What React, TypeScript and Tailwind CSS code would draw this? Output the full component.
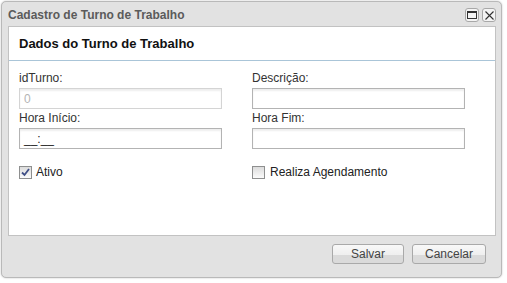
import React from "react";

const font = { fontFamily: '"Liberation Sans", Arial, sans-serif' };

function Checkbox({ checked }: { checked?: boolean }) {
  return (
    <span className="w-[13px] h-[13px] border border-[#8e8f8f] bg-gradient-to-b from-[#dcdcdc] to-[#fbfbfb] flex items-center justify-center shrink-0">
      {checked && (
        <svg width="9" height="9" viewBox="0 0 9 9">
          <path d="M1 4.5 L3.5 7 L8 1" fill="none" stroke="#3f4f86" strokeWidth="1.8" />
        </svg>
      )}
    </span>
  );
}

function Field({ label, value, disabled, w }: { label: string; value?: string; disabled?: boolean; w: string }) {
  return (
    <div className="flex flex-col">
      <div className="h-[16px] leading-[16px] text-[12px] text-[#333]">{label}</div>
      <div
        className={`mt-[2px] h-[21px] ${w} border ${disabled ? "border-[#d4d4d4] text-[#b4b4b4]" : "border-[#b3b3b3] text-[#222]"} bg-white shadow-[inset_0_2px_2px_rgba(0,0,0,0.07)] px-[4px] flex items-center text-[12px]`}
      >
        {value}
      </div>
    </div>
  );
}

export default function App() {
  return (
    <div className="w-[507px] h-[283px] bg-white" style={font}>
      <div className="relative left-[1px] top-[1px] w-[501px] h-[277px] rounded-[5px] border border-[#b9b9b9] bg-[#e2e2e2] shadow-[0_0_2px_rgba(0,0,0,0.25)] flex flex-col">
        <div className="h-[24px] flex items-center pl-[6px] pr-[5px] justify-between">
          <span className="text-[12px] font-bold text-[#5b5b5b] mt-[1px]">Cadastro de Turno de Trabalho</span>
          <div className="flex gap-[3px] mt-[2px]">
            <span className="w-[14px] h-[14px] rounded-[3px] border border-[#a8a8a8] bg-[#f4f4f4] flex items-center justify-center">
              <svg width="10" height="8" viewBox="0 0 10 8">
                <rect x="0.5" y="0.5" width="9" height="7" fill="none" stroke="#333" />
                <line x1="0" y1="1.5" x2="10" y2="1.5" stroke="#333" strokeWidth="1" />
              </svg>
            </span>
            <span className="w-[14px] h-[14px] rounded-[3px] border border-[#a8a8a8] bg-[#f4f4f4] flex items-center justify-center">
              <svg width="9" height="9" viewBox="0 0 9 9">
                <path d="M0.5 0.5 L8.5 8.5 M8.5 0.5 L0.5 8.5" stroke="#333" strokeWidth="1.1" />
              </svg>
            </span>
          </div>
        </div>
        <div className="ml-[6px] w-[488px] h-[210px] border border-[#c2c2c2] bg-white flex flex-col">
          <div className="h-[34px] border-b border-[#aac5d8] flex items-center pl-[10px]">
            <span className="text-[13px] font-bold text-[#111]">Dados do Turno de Trabalho</span>
          </div>
          <div className="pl-[10px] pt-[9px] flex gap-[30px]">
            <div className="flex flex-col gap-[1px]">
              <Field label="idTurno:" value="0" disabled w="w-[203px]" />
              <Field label="Hora Início:" value="__:__" w="w-[203px]" />
            </div>
            <div className="flex flex-col gap-[1px]">
              <Field label="Descrição:" w="w-[213px]" />
              <Field label="Hora Fim:" w="w-[213px]" />
            </div>
          </div>
          <div className="pl-[10px] mt-[15px] flex gap-[30px] h-[16px] items-center">
            <div className="w-[203px] flex items-center gap-[4px] text-[12px] text-[#222]">
              <Checkbox checked />
              <span>Ativo</span>
            </div>
            <div className="flex items-center gap-[5px] text-[12px] text-[#222]">
              <Checkbox />
              <span>Realiza Agendamento</span>
            </div>
          </div>
        </div>
        <div className="flex justify-end gap-[8px] pr-[15px] pt-[8px]">
          <button className="w-[72px] h-[20px] rounded-[3px] border border-[#a9a9a9] bg-[linear-gradient(#f8f8f8_0%,#efefef_55%,#dadada_56%,#dadada_100%)] text-[12px] text-[#444]">
            Salvar
          </button>
          <button className="w-[74px] h-[20px] rounded-[3px] border border-[#a9a9a9] bg-[linear-gradient(#f8f8f8_0%,#efefef_55%,#dadada_56%,#dadada_100%)] text-[12px] text-[#444]">
            Cancelar
          </button>
        </div>
      </div>
    </div>
  );
}
